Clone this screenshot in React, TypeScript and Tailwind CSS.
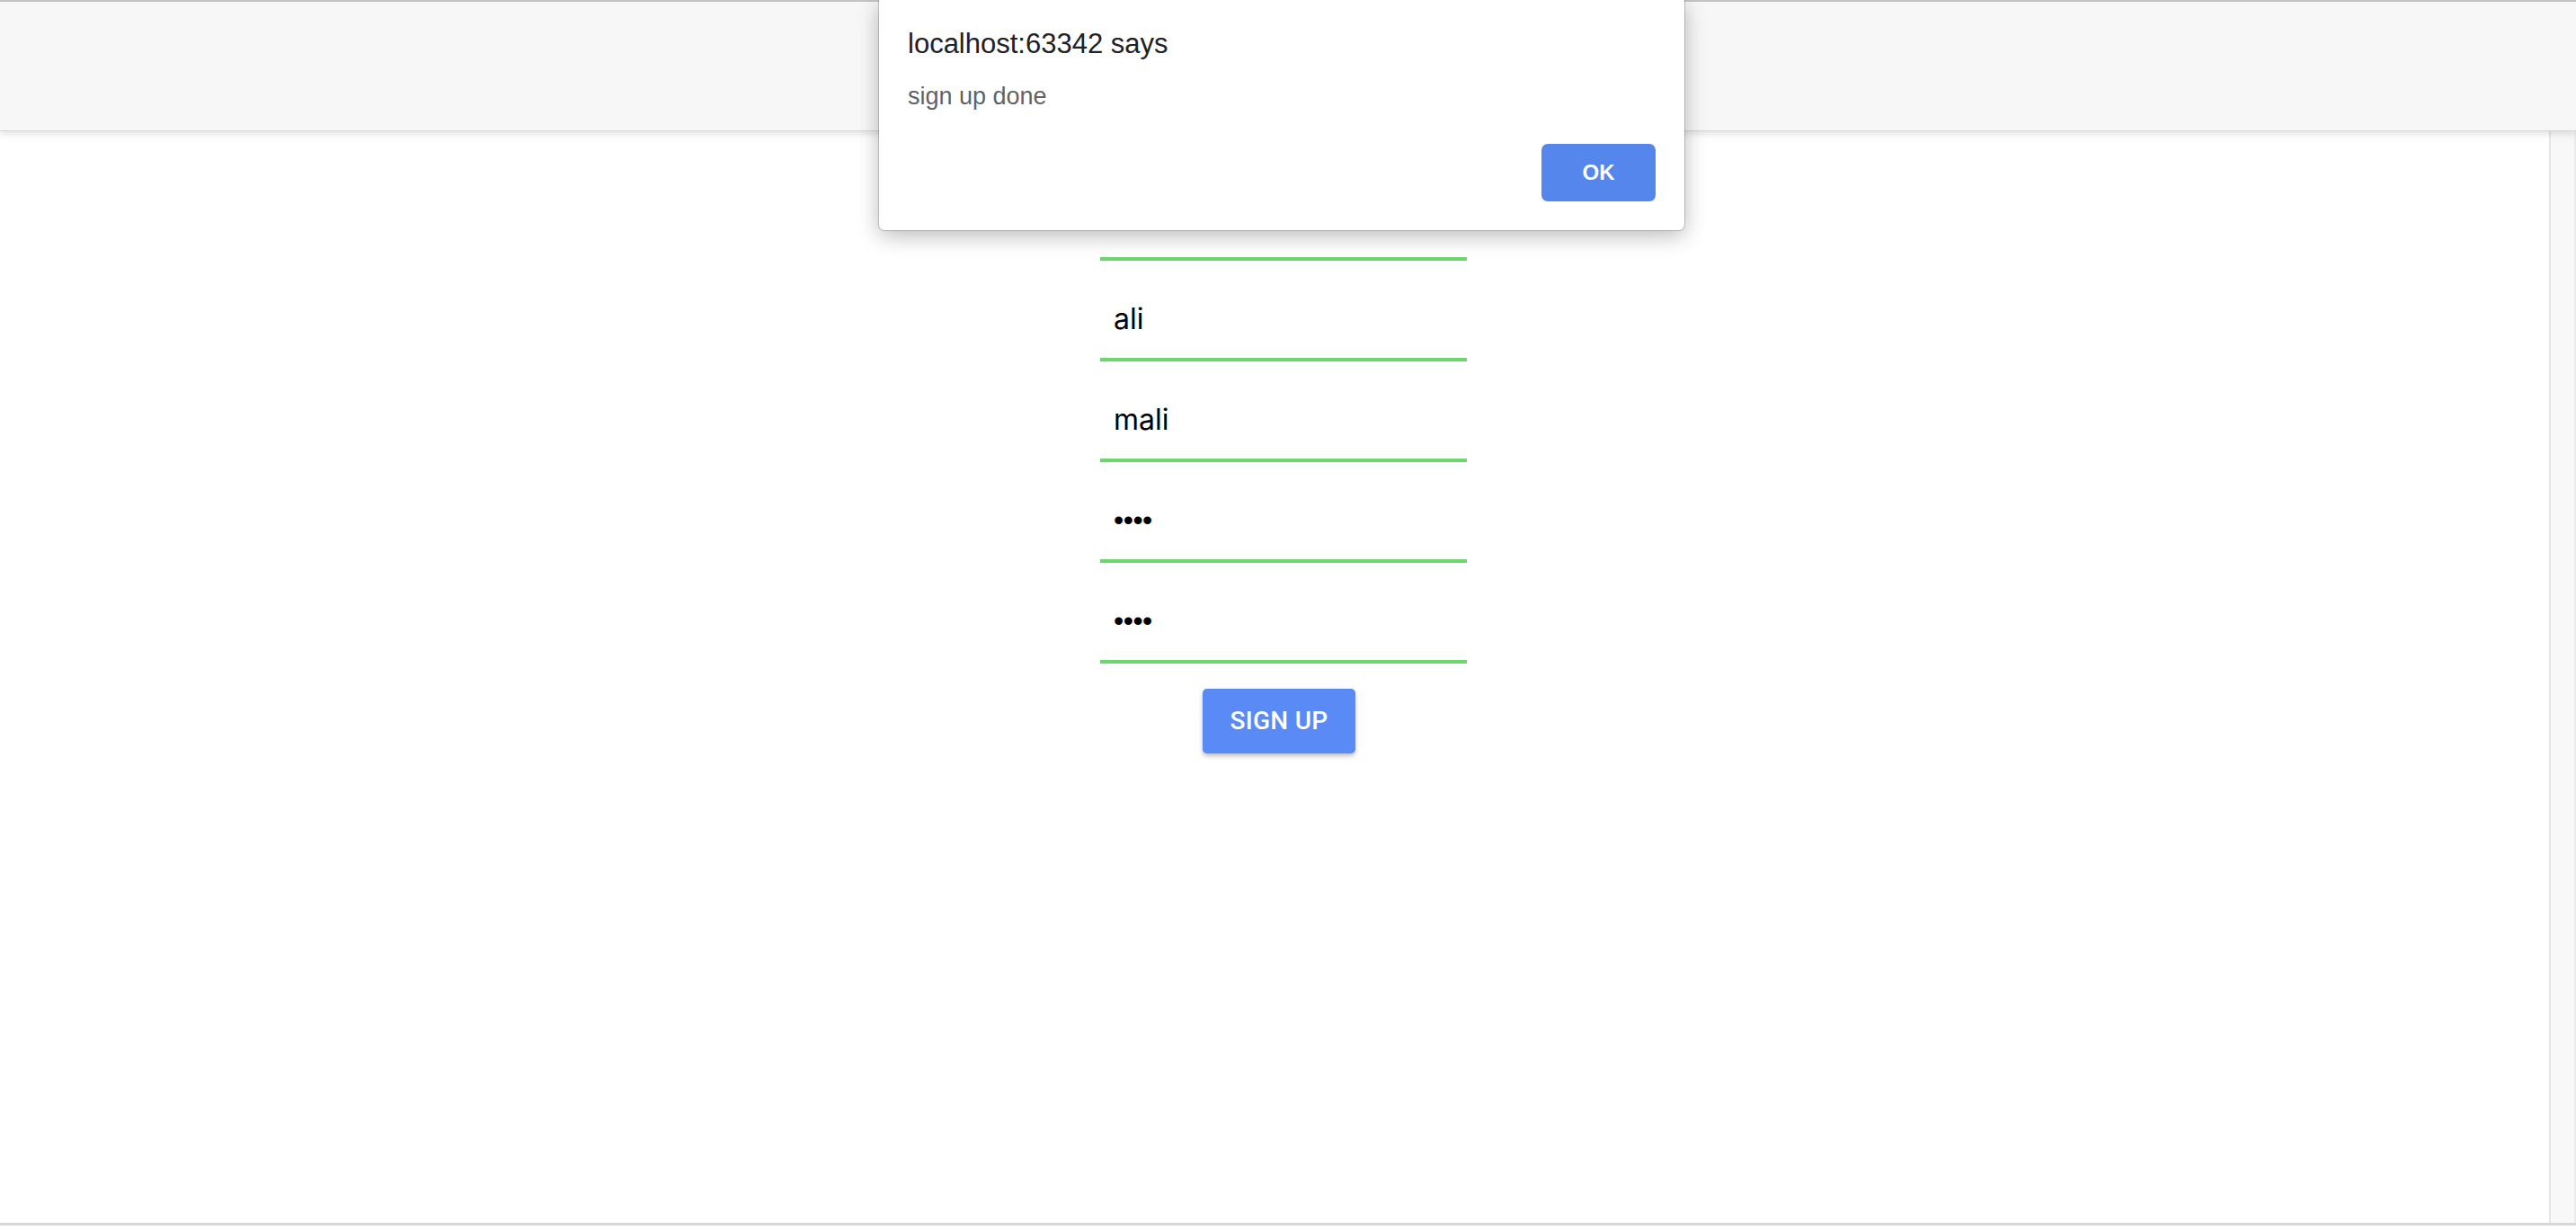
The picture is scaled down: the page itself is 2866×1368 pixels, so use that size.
import React from 'react'

const fieldCls =
  'block w-[408px] h-[112px] bg-transparent border-0 border-b-4 border-[#6cd571] outline-none pl-[15px] pt-[44px] pb-[24px] text-[32px] leading-10 text-black'

const pwCls = fieldCls + " font-['Liberation_Sans',Arial,sans-serif] text-[28px] tracking-[-0.5px]"

const App = () => {
  return (
    <div className="relative flex flex-col h-[1368px] w-full overflow-hidden bg-white font-['Inter',sans-serif]">
      {/* top bar */}
      <header className="relative z-10 h-[146px] shrink-0 border-t-2 border-[#c4c4c4] border-b border-b-[#d6d6d6] bg-[#f7f7f7] shadow-[0_3px_8px_rgba(0,0,0,0.12)]" />

      <div className="flex h-[1214px] shrink-0">
        <main className="flex-1 pt-[32px]">
          <form className="ml-[1224px] w-[408px] flex flex-col" onSubmit={(e) => e.preventDefault()}>
            <input type="text" className={fieldCls} defaultValue="" />
            <input type="text" className={fieldCls} defaultValue="ali" />
            <input type="text" className={fieldCls} defaultValue="mali" />
            <input type="password" className={pwCls} defaultValue="1234" />
            <input type="password" className={pwCls} defaultValue="1234" />
            <button
              type="submit"
              className="mt-[28px] ml-[114px] w-[170px] h-[72px] rounded-[5px] bg-[#598af5] text-white text-[28px] font-medium tracking-[0.3px] font-['Roboto',sans-serif] shadow-[0_3px_5px_rgba(0,0,0,0.25)]"
            >
              SIGN UP
            </button>
          </form>
        </main>
        {/* scrollbar track */}
        <div className="w-[30px] shrink-0 border-l-2 border-[#e6e6e6] border-r-2 border-r-[#ebebeb] bg-[#f8f8f8]" />
      </div>
      <div className="h-[3px] shrink-0 bg-[#d8d8d8]" />
      <div className="h-[5px] shrink-0 bg-white" />

      {/* alert dialog */}
      <div className="absolute z-20 left-[978px] top-0 w-[896px] h-[256px] bg-white rounded-b-[6px] shadow-[0_0_0_1px_rgba(0,0,0,0.18),0_6px_24px_rgba(0,0,0,0.28)] font-['Liberation_Sans',Arial,sans-serif] px-[32px] pt-[30px] flex flex-col">
        <div className="text-[31px] leading-[38px] text-[#202124]">localhost:63342 says</div>
        <div className="mt-[23px] text-[27px] leading-[32px] text-[#5f6368]">sign up done</div>
        <div className="flex justify-end mt-[37px]">
          <button
            type="button"
            className="w-[127px] h-[64px] rounded-[7px] bg-[#5586ec] text-white text-[24px] font-bold"
          >
            OK
          </button>
        </div>
      </div>
    </div>
  )
}

export default App
